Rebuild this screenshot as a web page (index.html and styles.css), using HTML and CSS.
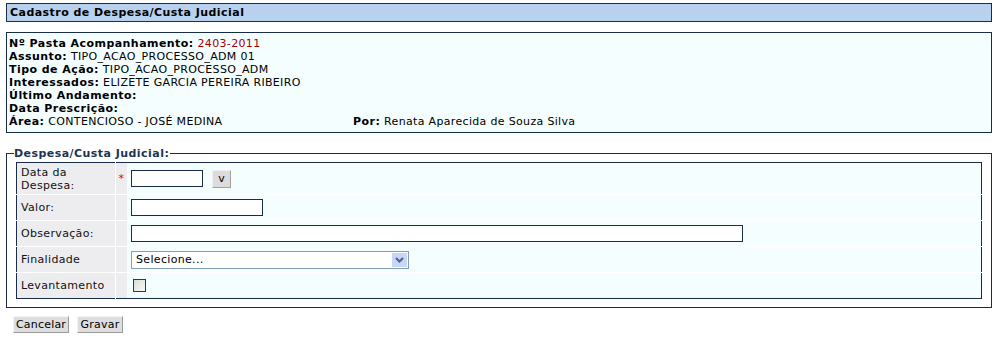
FILE: index.html
```html
<!DOCTYPE html>
<html>
<head>
<meta charset="utf-8">
<link rel="stylesheet" href="styles.css">
</head>
<body>
<div class="page">
  <div class="titlebar">Cadastro de Despesa/Custa Judicial</div>
  <div class="info">
    <div class="line"><b>Nº Pasta Acompanhamento:</b> <span class="red">2403-2011</span></div>
    <div class="line"><b>Assunto:</b> TIPO_ACAO_PROCESSO_ADM 01</div>
    <div class="line"><b>Tipo de Ação:</b> TIPO_ACAO_PROCESSO_ADM</div>
    <div class="line"><b>Interessados:</b> ELIZETE GARCIA PEREIRA RIBEIRO</div>
    <div class="line"><b>Último Andamento:</b></div>
    <div class="line"><b>Data Prescrição:</b></div>
    <div class="line split"><span class="area"><b>Área:</b> CONTENCIOSO - JOSÉ MEDINA</span><span><b>Por:</b> Renata Aparecida de Souza Silva</span></div>
  </div>
  <fieldset class="fs">
    <legend>Despesa/Custa Judicial:</legend>
    <table class="form">
      <tr class="r1">
        <td class="lbl">Data da Despesa:</td>
        <td class="req"><span class="star">*</span></td>
        <td class="fld"><span class="inp w72"></span><span class="btn-v">v</span></td>
      </tr>
      <tr>
        <td class="lbl">Valor:</td>
        <td class="req"></td>
        <td class="fld"><span class="inp w132"></span></td>
      </tr>
      <tr>
        <td class="lbl">Observação:</td>
        <td class="req"></td>
        <td class="fld"><span class="inp w612"></span></td>
      </tr>
      <tr>
        <td class="lbl">Finalidade</td>
        <td class="req"></td>
        <td class="fld"><span class="sel"><span class="sel-text">Selecione...</span><span class="sel-btn"><svg width="9" height="6" viewBox="0 0 9 6"><path d="M1 1 L4.5 4.5 L8 1" fill="none" stroke="#4d6185" stroke-width="2"/></svg></span></span></td>
      </tr>
      <tr>
        <td class="lbl">Levantamento</td>
        <td class="req"></td>
        <td class="fld"><span class="chk"></span></td>
      </tr>
    </table>
  </fieldset>
  <div class="actions">
    <span class="btn b-cancel">Cancelar</span>
    <span class="btn b-save">Gravar</span>
  </div>
</div>
</body>
</html>
```
FILE: styles.css
```css
html, body {
  margin: 0;
  padding: 0;
  background: #ffffff;
}
body {
  font-family: "DejaVu Sans", Verdana, sans-serif;
  font-size: 11px;
  letter-spacing: 0.33px;
  color: #000;
}
b, .titlebar, .fs legend {
  letter-spacing: 0.45px;
}
.page {
  padding: 3px 7px 0 6px;
}
.titlebar {
  background: #b8d1ee;
  border: 1px solid #172d4a;
  height: 17px;
  line-height: 17px;
  padding-left: 3px;
  font-weight: bold;
}
.info {
  margin-top: 10px;
  background: #f5feff;
  border: 1px solid #172d4a;
  padding: 4px 2px 3px 2px;
  height: 92px;
}
.line {
  line-height: 13px;
  white-space: nowrap;
}
.red { color: #a50000; }
.split { display: flex; }
.area { width: 344px; }
.fs {
  margin: 14px 0 0 0;
  padding: 2px 9px 8px 9px;
  border: 1px solid #172d4a;
  min-width: 0;
}
.fs legend {
  font-weight: bold;
  color: #1b3553;
  padding: 0 1px 0 0;
  margin-left: -2px;
  font-size: 11px;
}
.form {
  width: 100%;
  border-collapse: collapse;
  border: 1px solid #172d4a;
  background: #f5feff;
}
.form td {
  padding: 0;
  border-top: 1px solid #ffffff;
  height: 25px;
}
.form tr:first-child td { border-top: none; }
.form tr.r1 td { height: 31px; }
.lbl {
  width: 94px;
  padding-left: 4px !important;
  background: #ededf0;
  border-right: 1px solid #ffffff;
  color: #111;
  line-height: 13px;
}
.req {
  width: 11px;
  background: #ededf0;
  text-align: center;
  vertical-align: middle;
}
.star {
  color: #e00000;
  font-size: 11px;
}
.fld {
  padding-left: 4px !important;
  vertical-align: middle;
}
.inp {
  display: inline-block;
  vertical-align: middle;
  height: 15px;
  border: 1px solid #172d4a;
  background: #fff;
  box-sizing: content-box;
}
.w72 { width: 70px; }
.w132 { width: 130px; }
.w612 { width: 610px; }
.btn-v {
  display: inline-block;
  vertical-align: middle;
  margin-left: 9px;
  width: 17px;
  height: 16px;
  line-height: 16px;
  text-align: center;
  letter-spacing: 0;
  background: #dcdcdc;
  border-right: 1px solid #a0a0a0;
  border-bottom: 1px solid #a0a0a0;
  border-top: 1px solid #f0f0f0;
  border-left: 1px solid #f0f0f0;
  font-size: 11px;
}
.sel {
  display: inline-flex;
  align-items: center;
  vertical-align: middle;
  width: 276px;
  height: 16px;
  border: 1px solid #7f9db9;
  background: #fff;
  justify-content: space-between;
}
.sel-text { padding-left: 4px; line-height: 16px; }
.sel-btn {
  width: 15px;
  height: 14px;
  margin-right: 1px;
  background: #c6d6f7;
  border: 0;
  display: flex;
  align-items: center;
  justify-content: center;
}
.chk {
  display: inline-block;
  vertical-align: middle;
  margin-left: 2px;
  width: 11px;
  height: 11px;
  border: 1px solid #1c3c5c;
  background: linear-gradient(135deg, #dcdcd6, #f8f8f6);
}
.actions {
  margin-top: 8px;
  padding-left: 7px;
  display: flex;
  gap: 8px;
}
.btn {
  display: inline-block;
  height: 15px;
  line-height: 15px;
  padding: 0;
  text-align: center;
  letter-spacing: 0.2px;
  background: #dedede;
  border-top: 1px solid #f4f4f4;
  border-left: 1px solid #f4f4f4;
  border-right: 1px solid #9a9a9a;
  border-bottom: 1px solid #9a9a9a;
}
.b-cancel { width: 54px; }
.b-save { width: 44px; }
```
